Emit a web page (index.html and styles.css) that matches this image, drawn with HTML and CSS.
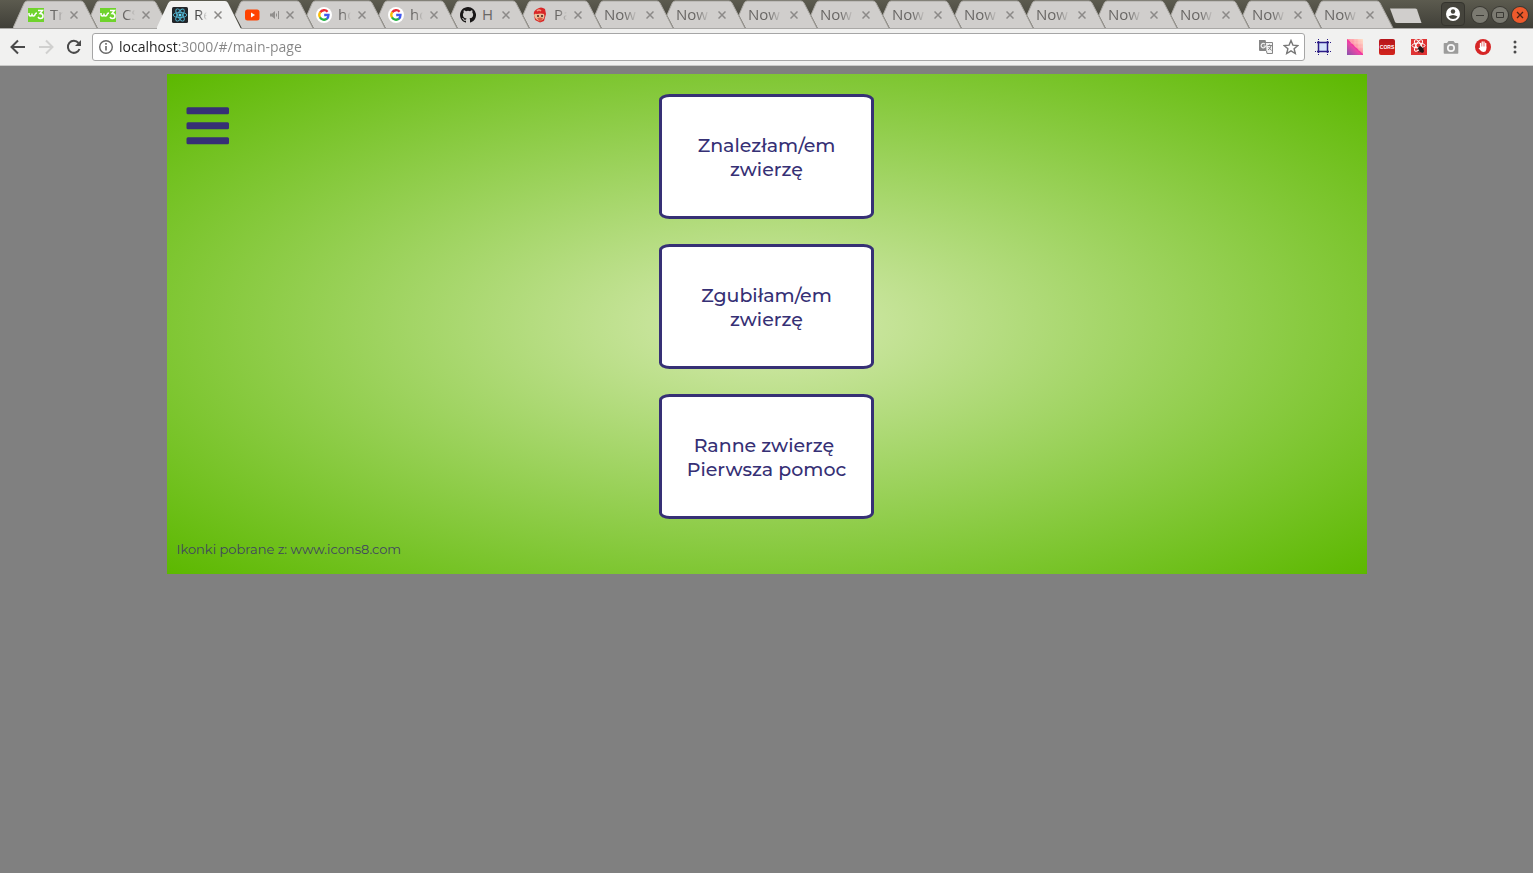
FILE: index.html
```html
<!DOCTYPE html>
<html lang="pl">
<head>
<meta charset="utf-8">
<title>React App</title>
<link rel="stylesheet" href="styles.css">
</head>
<body>
<svg class="defs" aria-hidden="true">
  <symbol id="tab" viewBox="0 0 86 28"><path d="M13 28.500L6 15L11 3.500Q12 1 14 1H68Q70 1 71 3L84 28.500Z" fill="#d0cecc"/><path d="M6 15L11 3.500Q12 1 14 1H68Q70 1 71 3L84 28" fill="none" stroke="#aaa8a3"/></symbol>
  <symbol id="tab-first" viewBox="0 0 86 28"><path d="M0 28L11 3.500Q12 1 14 1H68Q70 1 71 3L84 28.500Z" fill="#d0cecc"/><path d="M0 28L11 3.500Q12 1 14 1H68Q70 1 71 3L84 28" fill="none" stroke="#aaa8a3"/></symbol>
  <symbol id="tab-active" viewBox="0 0 86 29"><path d="M-1 29L11 3.500Q12 1 14 1H68Q70 1 71 3L84 29Z" fill="#f1f1f0"/></symbol>
  <symbol id="x" viewBox="0 0 8 8"><path d="M.5.5l7 7M7.500.5l-7 7" stroke="#8c8a88" stroke-width="1.500" fill="none"/></symbol>
  <symbol id="w3" viewBox="0 0 16 16"><path d="M0 1h16v14H0z" fill="#6fd32c"/><path d="M1 6v1.500a1.500 1.500 0 0 0 3 0V6.500v1a1.500 1.500 0 0 0 3 0Q7.500 6 9 6M10 3.500h4.500L12 6.500q3 0 3 2.500t-2.500 2.500q-1.500 0-2.500-1.500" fill="none" stroke="#fff" stroke-width="1.500"/></symbol>
  <symbol id="react" viewBox="0 0 16 16"><rect width="16" height="16" rx="1.500" fill="#222529"/><g fill="none" stroke="#52b5d1" stroke-width=".9"><ellipse cx="8" cy="8" rx="6.800" ry="2.600"/><ellipse cx="8" cy="8" rx="6.800" ry="2.600" transform="rotate(60 8 8)"/><ellipse cx="8" cy="8" rx="6.800" ry="2.600" transform="rotate(120 8 8)"/></g><circle cx="8" cy="8" r="1.500" fill="#61dafb"/></symbol>
  <symbol id="youtube" viewBox="0 0 16 16"><rect x="1" y="2.500" width="14.500" height="11" rx="2.500" fill="#ff4200"/><path d="M7 5.500v5L11 8z" fill="#fff"/></symbol>
  <symbol id="sound" viewBox="0 0 11 10"><path d="M0 3.500h2L5 1v8L2 6.500H0z" fill="#918f8d"/><path d="M6.500 3.500v3M8.500 1v8" stroke="#918f8d" fill="none"/></symbol>
  <symbol id="google" viewBox="0 0 16 16"><circle cx="8" cy="8" r="8" fill="#fff"/><g fill="none" stroke-width="2.300"><path d="M4.200 5.400A4.700 4.700 0 0 1 11.600 4.700" stroke="#ea2b35"/><path d="M4.200 5.200A4.800 4.800 0 0 0 4.200 10.700" stroke="#fbbc05"/><path d="M4 10.400A4.700 4.700 0 0 0 11 11.700" stroke="#28b446"/><path d="M8.200 8h4.300Q12.500 10.500 10.800 11.900" stroke="#4058ee"/></g></symbol>
  <symbol id="github" viewBox="0 0 16 16"><path fill="#191717" d="M8 0C3.580 0 0 3.580 0 8c0 3.540 2.290 6.530 5.470 7.590.4.070.55-.17.55-.38 0-.19-.01-.82-.01-1.490-2.010.37-2.530-.49-2.690-.94-.09-.23-.48-.94-.82-1.130-.28-.15-.68-.52-.01-.53.63-.01 1.080.58 1.230.82.72 1.210 1.870.87 2.330.66.07-.52.28-.87.51-1.070-1.780-.2-3.640-.89-3.640-3.950 0-.87.31-1.590.82-2.150-.08-.2-.36-1.020.08-2.120 0 0 .67-.21 2.200.82a7.600 7.600 0 0 1 4 0c1.530-1.040 2.200-.82 2.200-.82.44 1.100.16 1.920.08 2.120.51.56.82 1.270.82 2.150 0 3.070-1.870 3.750-3.650 3.950.29.25.54.73.54 1.480 0 1.070-.01 1.930-.01 2.200 0 .21.15.46.55.38A8 8 0 0 0 8 0z"/></symbol>
  <symbol id="monk" viewBox="0 0 16 16"><path d="M2 8Q1 4 5 2Q9-1 13 2L14 7L12 14L8 15.500L3 13z" fill="#d92727"/><path d="M2 8Q3 6 5 7Q9 6 12 7Q14 12 8 14Q3 13 2 8z" fill="#eebd97"/><path d="M5 4Q7 2 9 4" stroke="#f59a82" fill="none" stroke-width="1.500"/><path d="M5 9h2M9 9h2" stroke="#40251c" stroke-width="1.500"/><path d="M5 11Q8 10 11 11L8 15z" fill="#d95b40"/></symbol>
</svg>

<header class="browser">
  <div class="titlebar">
    <div class="tabs">
      <div class="tab"><svg class="shape"><use href="#tab-first"/></svg><svg class="fav"><use href="#w3"/></svg><span class="name">Tr</span><button class="close" aria-label="Zamknij"><svg><use href="#x"/></svg></button></div>
      <div class="tab"><svg class="shape"><use href="#tab"/></svg><svg class="fav"><use href="#w3"/></svg><span class="name">CS</span><button class="close" aria-label="Zamknij"><svg><use href="#x"/></svg></button></div>
      <div class="tab active"><svg class="shape"><use href="#tab-active"/></svg><svg class="fav"><use href="#react"/></svg><span class="name">Re</span><button class="close" aria-label="Zamknij"><svg><use href="#x"/></svg></button></div>
      <div class="tab"><svg class="shape"><use href="#tab"/></svg><svg class="fav"><use href="#youtube"/></svg><span class="audio"><svg><use href="#sound"/></svg></span><button class="close" aria-label="Zamknij"><svg><use href="#x"/></svg></button></div>
      <div class="tab"><svg class="shape"><use href="#tab"/></svg><svg class="fav"><use href="#google"/></svg><span class="name">ho</span><button class="close" aria-label="Zamknij"><svg><use href="#x"/></svg></button></div>
      <div class="tab"><svg class="shape"><use href="#tab"/></svg><svg class="fav"><use href="#google"/></svg><span class="name">ho</span><button class="close" aria-label="Zamknij"><svg><use href="#x"/></svg></button></div>
      <div class="tab"><svg class="shape"><use href="#tab"/></svg><svg class="fav"><use href="#github"/></svg><span class="name whole">H</span><button class="close" aria-label="Zamknij"><svg><use href="#x"/></svg></button></div>
      <div class="tab"><svg class="shape"><use href="#tab"/></svg><svg class="fav"><use href="#monk"/></svg><span class="name">Pa</span><button class="close" aria-label="Zamknij"><svg><use href="#x"/></svg></button></div>
      <div class="tab"><svg class="shape"><use href="#tab"/></svg><span class="name">Now</span><button class="close" aria-label="Zamknij"><svg><use href="#x"/></svg></button></div>
      <div class="tab"><svg class="shape"><use href="#tab"/></svg><span class="name">Now</span><button class="close" aria-label="Zamknij"><svg><use href="#x"/></svg></button></div>
      <div class="tab"><svg class="shape"><use href="#tab"/></svg><span class="name">Now</span><button class="close" aria-label="Zamknij"><svg><use href="#x"/></svg></button></div>
      <div class="tab"><svg class="shape"><use href="#tab"/></svg><span class="name">Now</span><button class="close" aria-label="Zamknij"><svg><use href="#x"/></svg></button></div>
      <div class="tab"><svg class="shape"><use href="#tab"/></svg><span class="name">Now</span><button class="close" aria-label="Zamknij"><svg><use href="#x"/></svg></button></div>
      <div class="tab"><svg class="shape"><use href="#tab"/></svg><span class="name">Now</span><button class="close" aria-label="Zamknij"><svg><use href="#x"/></svg></button></div>
      <div class="tab"><svg class="shape"><use href="#tab"/></svg><span class="name">Now</span><button class="close" aria-label="Zamknij"><svg><use href="#x"/></svg></button></div>
      <div class="tab"><svg class="shape"><use href="#tab"/></svg><span class="name">Now</span><button class="close" aria-label="Zamknij"><svg><use href="#x"/></svg></button></div>
      <div class="tab"><svg class="shape"><use href="#tab"/></svg><span class="name">Now</span><button class="close" aria-label="Zamknij"><svg><use href="#x"/></svg></button></div>
      <div class="tab"><svg class="shape"><use href="#tab"/></svg><span class="name">Now</span><button class="close" aria-label="Zamknij"><svg><use href="#x"/></svg></button></div>
      <div class="tab"><svg class="shape"><use href="#tab"/></svg><span class="name">Now</span><button class="close" aria-label="Zamknij"><svg><use href="#x"/></svg></button></div>
    </div>
    <button class="new-tab" aria-label="Nowa karta"><svg width="33" height="16" viewBox="0 0 33 16"><path d="M1 .5h25q1.500 0 2 1L32.500 15H8q-1.500 0-2-1z" fill="#d0cecc"/></svg></button>
    <div class="window-controls">
      <button class="profile" aria-label="Profil"><svg width="14" height="14" viewBox="0 0 14 14"><circle cx="7" cy="7" r="7" fill="#fff"/><circle cx="7" cy="4.500" r="2.200" fill="#45443c"/><path d="M2.500 9.500Q7 6.500 11.500 9.500Q10 12 7 12T2.500 9.500z" fill="#45443c"/></svg></button>
      <button class="round" aria-label="Minimalizuj"><svg width="16" height="16" viewBox="0 0 16 16"><path d="M4 8.500h8" stroke="#3a3934"/></svg></button>
      <button class="round" aria-label="Maksymalizuj"><svg width="16" height="16" viewBox="0 0 16 16"><path d="M4.500 5.500h7v5h-7z" fill="none" stroke="#3a3934"/></svg></button>
      <button class="round quit" aria-label="Zamknij okno"><svg width="16" height="16" viewBox="0 0 16 16"><path d="M5 5l6 6M11 5l-6 6" stroke="#4b2113" stroke-width="1.300"/></svg></button>
    </div>
  </div>

  <div class="toolbar">
    <button class="nav" aria-label="Wstecz"><svg width="16" height="16" viewBox="0 0 16 16"><path d="M15 8H2M8 1.500L1.500 8L8 14.500" fill="none" stroke="#4a4a4a" stroke-width="2"/></svg></button>
    <button class="nav" aria-label="Dalej" disabled><svg width="16" height="16" viewBox="0 0 16 16"><path d="M1 8h13M8 1.500L14.500 8L8 14.500" fill="none" stroke="#d0d0cf" stroke-width="2"/></svg></button>
    <button class="nav" aria-label="Odśwież"><svg width="16" height="16" viewBox="0 0 16 16"><path d="M13.500 10A6 6 0 1 1 12.500 4" fill="none" stroke="#4a4a4a" stroke-width="2"/><path d="M15 1v6H9z" fill="#4a4a4a"/></svg></button>
    <div class="omnibox">
      <svg width="16" height="16" viewBox="0 0 16 16"><circle cx="8" cy="8" r="6.300" fill="none" stroke="#666" stroke-width="1.400"/><path d="M8 7v4.500M8 4v1.700" stroke="#666" stroke-width="1.600"/></svg>
      <input class="url" type="text" aria-label="Adres" value="localhost:3000/#/main-page">
      <button aria-label="Przetłumacz"><svg width="16" height="16" viewBox="0 0 16 16"><path d="M1 1h6.500l3 11H2Q1 12 1 11z" fill="#858585"/><path d="M8 3.500h6.500v11H9L8.500 12" fill="#f3f3f3" stroke="#858585"/><path d="M7 5.200A2.200 2.200 0 1 0 7.500 7H5.500" fill="none" stroke="#eee" stroke-width="1.200"/><path d="M9.500 6.500h4.500M11.500 5.500v1M13 7Q12.500 9.500 10 11M10.500 8l3 3.500" fill="none" stroke="#858585"/></svg></button>
      <button aria-label="Dodaj zakładkę"><svg width="16" height="16" viewBox="0 0 16 16"><path d="M8 1.500l1.900 4.600 5 .4-3.800 3.200 1.200 4.800L8 11.900l-4.300 2.600 1.200-4.800L1.100 6.500l5-.4z" fill="none" stroke="#777" stroke-width="1.400"/></svg></button>
    </div>
    <button class="ext" aria-label="Linijka"><svg width="16" height="16" viewBox="0 0 16 16"><path d="M3 3h10v10H3z" fill="#d5e3fb"/><path d="M3.500 2v12M12.500 2v12M2 3.500h12M2 12.500h12" stroke="#2b1c86" stroke-width="1.500"/><path d="M0 3h1v1H0zM15 3h1v1h-1zM0 12h1v1H0zM15 12h1v1h-1zM3 0h1v1H3zM12 0h1v1h-1zM3 15h1v1H3zM12 15h1v1h-1z" fill="#2b1c86"/></svg></button>
    <button class="ext" aria-label="Kolory"><svg width="16" height="16" viewBox="0 0 16 16"><defs><linearGradient id="pk" x1="0" y1="1" x2="1" y2="0"><stop offset="0" stop-color="#8752ad"/><stop offset=".48" stop-color="#f747a5"/><stop offset=".52" stop-color="#ff8ea2"/><stop offset="1" stop-color="#ffe2c8"/></linearGradient></defs><path d="M0 0h16v16H0z" fill="url(#pk)"/><path d="M0 1l16 15" stroke="#ef38a3" stroke-width="1.500"/><path d="M4 0v5M8 0v8M12 0v12M4 4h12M8 8h8" stroke="#fff" stroke-opacity=".18"/></svg></button>
    <button class="ext" aria-label="CORS"><span class="cors">CORS</span></button>
    <button class="ext" aria-label="React"><svg width="16" height="16" viewBox="0 0 16 16"><path d="M0 0h16v16H0z" fill="#df3434"/><g fill="none" stroke="#fff"><ellipse cx="7.500" cy="6.500" rx="6.500" ry="2.400"/><ellipse cx="7.500" cy="6.500" rx="6.500" ry="2.400" transform="rotate(60 7.500 6.500)"/><ellipse cx="7.500" cy="6.500" rx="6.500" ry="2.400" transform="rotate(120 7.500 6.500)"/></g><ellipse cx="10" cy="10.500" rx="2.200" ry="3.500" fill="#241717" transform="rotate(-35 10 10.500)"/><path d="M6 10l7-1M7 13l6-1M9 7l3 7" stroke="#241717" stroke-width=".8"/></svg></button>
    <button class="ext" aria-label="Zrzut ekranu"><svg width="16" height="16" viewBox="0 0 16 16"><path d="M1.500 4H4l1.500-2h5L12 4h2.500q.8 0 .8.800V14q0 .8-.8.800h-13q-.8 0-.8-.8V4.800Q.7 4 1.500 4z" fill="#9c9c9b"/><circle cx="8" cy="9" r="3.200" fill="#9c9c9b" stroke="#f6f6f6" stroke-width="1.700"/></svg></button>
    <button class="ext" aria-label="AdBlock"><svg width="16" height="16" viewBox="0 0 16 16"><circle cx="8" cy="8" r="8" fill="#d62626"/><path d="M5.500 9V4.500M7.200 8V3M9 8V3M10.700 9V4.500" stroke="#fff" stroke-width="1.300" stroke-linecap="round"/><path d="M5 7.500h6.300v3Q11 13 8.500 13Q6.500 13 3.700 9.500Q3.500 8.300 5 9z" fill="#fff"/></svg></button>
    <button class="ext" aria-label="Menu"><svg width="16" height="16" viewBox="0 0 16 16"><g fill="#4a4a4a"><circle cx="8" cy="3" r="1.500"/><circle cx="8" cy="8" r="1.500"/><circle cx="8" cy="13" r="1.500"/></g></svg></button>
  </div>
</header>

<main class="page">
  <div class="side">
    <button class="menu" aria-label="Menu"><svg width="44" height="38" viewBox="0 0 44 38"><g fill="#363075"><rect x="0.500" y="0.300" width="42.500" height="7" rx="1.500"/><rect x="0.500" y="15.300" width="42.500" height="7" rx="1.500"/><rect x="0.500" y="30.300" width="42.500" height="7" rx="1.500"/></g></svg></button>
    <footer class="credits">Ikonki pobrane z: www.icons8.com</footer>
  </div>
  <nav class="cards">
    <button class="card">Znalezłam/em<br>zwierzę</button>
    <button class="card">Zgubiłam/em<br>zwierzę</button>
    <button class="card">Ranne zwierzę&nbsp;<br>Pierwsza pomoc</button>
  </nav>
</main>
</body>
</html>
```
FILE: styles.css
```css
* { box-sizing: border-box; }

body {
  margin: 0;
  min-height: 100vh;
  background: #808080;
  font-family: "Open Sans", sans-serif;
}

button {
  margin: 0;
  padding: 0;
  border: 0;
  background: none;
  font: inherit;
}

svg { display: block; flex: none; }

.defs { position: absolute; width: 0; height: 0; }

/* Browser frame */
.titlebar {
  display: flex;
  height: 29px;
  padding: 0 5px 0 13px;
  border-bottom: 1px solid #a9a8a6;
  background: linear-gradient(#5c5b4f, #403f38);
}

.tabs { display: flex; min-width: 0; }

.tab {
  position: relative;
  display: flex;
  align-items: center;
  flex: 0 1 72px;
  width: 72px;
  height: 28px;
  padding: 0 7px 0 15px;
  font-size: 15px;
  color: #696765;
}

.tab > * { position: relative; }

.tab > .shape {
  position: absolute;
  left: 0;
  top: 0;
  width: 86px;
  height: 28px;
}

.tab.active { z-index: 1; color: #4a4a4a; }

.tab.active > .shape { height: 29px; overflow: visible; }

.fav { width: 16px; height: 16px; margin: 2px 6px 0 0; }

.name {
  flex: 1;
  min-width: 0;
  margin-right: 8px;
  white-space: nowrap;
  line-height: 20px;
  -webkit-mask-image: linear-gradient(to left, transparent, #000 14px);
  mask-image: linear-gradient(to left, transparent, #000 14px);
}

.fav + .name {
  margin-right: 7px;
  -webkit-mask-image: linear-gradient(to left, transparent, #000 8px);
  mask-image: linear-gradient(to left, transparent, #000 8px);
}

.fav + .whole { -webkit-mask-image: none; mask-image: none; }

.audio { flex: 1; display: flex; padding: 2px 0 0 4px; }
.audio svg { width: 11px; height: 10px; }

.close { padding-top: 2px; }
.close svg { width: 8px; height: 8px; }

.new-tab { padding: 3px 0 0 8px; }

.window-controls {
  display: flex;
  align-items: center;
  gap: 4px;
  margin-left: auto;
}

.profile {
  display: grid;
  place-items: center;
  width: 24px;
  height: 24px;
  margin-right: 3px;
  border: 1px solid #35342e;
  border-radius: 4px;
  background: #45443c;
}

.round {
  width: 16px;
  height: 16px;
  margin-top: 2px;
  border-radius: 50%;
  background: #7b7a71;
  box-shadow: 0 0 0 1px #393832;
}

.quit { background: #ee5a2c; }

.toolbar {
  display: flex;
  align-items: center;
  height: 37px;
  padding: 0 2px 0 4px;
  border-bottom: 1px solid #c9c9c8;
  background: #f1f1f0;
}

.nav {
  display: grid;
  place-items: center;
  width: 28px;
  height: 28px;
}

.omnibox {
  display: flex;
  align-items: center;
  flex: 1;
  height: 28px;
  margin: 0 2px 0 4px;
  padding: 0 5px;
  border: 1px solid #a6a6a6;
  border-radius: 3px;
  background: #fff;
}

/* The host name is darker than the rest of the address. */
.url {
  flex: 1;
  min-width: 0;
  margin: 0 8px 0 5px;
  padding: 0;
  border: 0;
  outline: 0;
  font: 14px/20px "Open Sans", sans-serif;
  color: transparent;
  background: linear-gradient(90deg, #222 59px, #858585 59px);
  -webkit-background-clip: text;
  background-clip: text;
}

.omnibox button + button { margin-left: 9px; }

.ext {
  display: grid;
  place-items: center;
  width: 32px;
  height: 28px;
}

.cors {
  width: 16px;
  border-radius: 2px;
  background: linear-gradient(#b5161b, #d3241c);
  color: #fff;
  font: bold 5px/16px "Liberation Sans", sans-serif;
  text-align: center;
}

/* Page */
.page {
  display: grid;
  grid-template-columns: 1fr auto 1fr;
  max-width: 1200px;
  min-height: 500px;
  margin: 8px auto;
  padding: 20px 10px;
  background: radial-gradient(#d6eab0, #5cb800);
  color: #363075;
  font-family: Montserrat, Inter, sans-serif;
}

.side {
  display: flex;
  flex-direction: column;
  justify-content: space-between;
  align-items: flex-start;
}

.menu { margin: 13px 0 0 9px; }

.credits {
  margin-bottom: -5px;
  font-size: 13px;
  line-height: 20px;
  color: #3f4560;
}

.cards {
  display: flex;
  flex-direction: column;
  gap: 25px;
}

.card {
  width: 215px;
  height: 125px;
  padding-top: 2px;
  border: 3px solid #363075;
  border-radius: 5%;
  background: #fff;
  color: #363075;
  font-size: 19px;
  font-weight: 500;
  line-height: 24px;
}
```
